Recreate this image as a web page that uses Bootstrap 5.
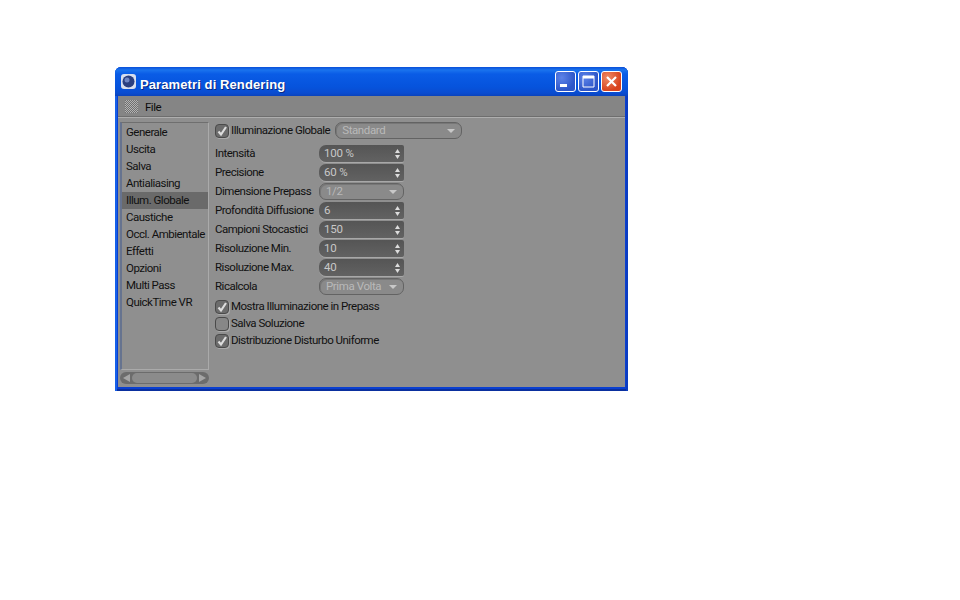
<!doctype html>
<html lang="it"><head><meta charset="utf-8"><title>Parametri di Rendering</title>
<link href="https://cdn.jsdelivr.net/npm/bootstrap@5.3.0/dist/css/bootstrap.min.css" rel="stylesheet">
<style>
html,body{background:#fff}
body{padding:67px 0 0 115px;font-family:Roboto,"Liberation Sans",sans-serif;font-size:11.5px;letter-spacing:-.5px;line-height:17px;color:#111}
.win{width:513px;height:324px;background:#0a3fd0;border-radius:6px 6px 0 0;padding:0 3px 4px 3px;box-shadow:inset 2px 0 0 #1660e8,inset -2px 0 0 #0c3cc0,inset 0 -2px 0 #0a2f9e}
.tbar{height:29px;margin:0 -3px;padding:0 6px 0 6px;border-radius:6px 6px 0 0;background:linear-gradient(#0a4fd8 0,#1a73ee 3px,#0a5ce6 7px,#0653dc 20px,#0a4cd0 26px,#0a43bc 29px)}
.ttl{font:bold 13px/29px "Liberation Sans",sans-serif;letter-spacing:.1px;color:#fff;text-shadow:1px 1px 0 #0a2a80;margin-left:4px;padding-top:5px;white-space:nowrap}
.wbtn{width:21px;height:21px;border:1px solid #fff;border-radius:3px;background:radial-gradient(circle at 30% 30%,#5d83e8,#2c55c8 70%);margin-left:2px}
.wbtn.cls{background:radial-gradient(circle at 30% 30%,#ee8a66,#d8431e 70%)}
.wbtn svg{display:block}
.body{height:291px;background:#8f8f8f}
.mbar{height:22px;background:#858585;border-bottom:1px solid #aeaeae;padding-left:7px;box-shadow:inset 0 -1px 0 #6e6e6e}
.dots{width:13px;height:13px;flex:none;background:repeating-conic-gradient(#b4b4b4 0 25%,#6f6f6f 0 50%) 0 0/2px 2px}
.mfile{margin-left:7px;padding-top:2px;color:#0c0c0c}
.main{height:269px;padding:4px 0 0 2px}
.side{width:89px}
.lst{height:248px;border:1px solid #6f6f6f;border-right-color:#aaa;border-bottom-color:#aaa;border-left:2px solid #66738f;padding-top:1px}
.itm{height:17px;padding-left:4px;white-space:nowrap}
.itm.cur{background:#6a6a6a}
.sbar{height:12px;margin-top:2px;border-radius:6px;background:#6c6c6c;padding:1px 12px}
.sthumb{height:10px;border-radius:5px;background:#8b8b8b}
.arr{position:absolute;top:2px;width:0;height:0;border-top:4px solid transparent;border-bottom:4px solid transparent}
.arr.lf{left:3px;border-right:7px solid #a5a5a5}
.arr.rt{right:3px;border-left:7px solid #a5a5a5}
.panel{padding:0 0 0 6px;flex:1}
.rw{height:19px}
.rw.last{margin-bottom:2px}
.ckrw{height:17px}
.top{height:17px;margin-bottom:5px}
.lab{width:104px;white-space:nowrap}
.ck{width:14px;height:14px;border-radius:4px;background:#6c6c6c;border:1px solid #4a4a4a;box-shadow:1px 1px 0 #aaa;margin:0 2px 0 0;flex:none}
.ck.off{background:#878787}
.ck svg{display:block}
.num{width:85px;height:17px;border-radius:7px 2px 2px 7px;background:linear-gradient(#555,#626262);color:#c8c8c8;padding:0 0 0 5px;box-shadow:0 1px 0 #a8a8a8;letter-spacing:-.2px}
.sel{width:85px;height:17px;border-radius:7px;background:#8a8a8a;border:1px solid #636363;color:#b9b9b9;padding:0 6px;box-shadow:inset 1px 1px 0 #777;letter-spacing:-.4px}
.sel.wd{width:127px;margin-left:5px}
.tri{width:0;height:0;border-left:4px solid transparent;border-right:4px solid transparent;border-top:4px solid #c8c8c8}
.ud{width:5px;height:10px;display:block}
</style></head><body>
<div class="win">
 <div class="tbar d-flex align-items-center">
  <svg width="15" height="15" viewBox="0 0 15 15"><rect width="15" height="15" rx="3" fill="#d8dfee"/><circle cx="7.5" cy="7.5" r="6" fill="#2a3f80"/><circle cx="6" cy="6" r="2.500" fill="#6f86c4"/></svg>
  <div class="ttl">Parametri di Rendering</div>
  <div class="ms-auto d-flex">
   <div class="wbtn"><svg width="19" height="19"><rect x="4" y="12" width="7" height="3" fill="#fff"/></svg></div>
   <div class="wbtn"><svg width="19" height="19"><path d="M4 4h11v11H4z" fill="none" stroke="#fff"/><rect x="4" y="4" width="11" height="2.500" fill="#fff"/></svg></div>
   <div class="wbtn cls"><svg width="19" height="19"><path d="M5 5l9 9M14 5l-9 9" stroke="#fff" stroke-width="2.200"/></svg></div>
  </div>
 </div>
 <div class="body">
  <div class="mbar d-flex align-items-center"><div class="dots"></div><div class="mfile">File</div></div>
  <div class="main d-flex">
   <div class="side">
    <div class="lst">
     <div class="itm">Generale</div><div class="itm">Uscita</div><div class="itm">Salva</div><div class="itm">Antialiasing</div>
     <div class="itm cur">Illum. Globale</div><div class="itm">Caustiche</div><div class="itm">Occl. Ambientale</div><div class="itm">Effetti</div>
     <div class="itm">Opzioni</div><div class="itm">Multi Pass</div><div class="itm">QuickTime VR</div>
    </div>
    <div class="sbar position-relative"><span class="arr lf"></span><div class="sthumb"></div><span class="arr rt"></span></div>
   </div>
   <div class="panel">
    <div class="top d-flex align-items-center"><span class="ck"><svg width="12" height="12"><path d="M2.500 6.500l2.500 3L10 2" fill="none" stroke="#ddd" stroke-width="2.200"/></svg></span><span>Illuminazione Globale</span><div class="sel wd d-flex align-items-center justify-content-between"><span>Standard</span><i class="tri"></i></div></div>
    <div class="rw d-flex align-items-center"><div class="lab">Intensità</div><div class="num d-flex align-items-center justify-content-between"><span>100 %</span><svg class="ud me-1" viewBox="0 0 5 10"><path d="M2.500 0L5 4H0zM2.500 10L0 6h5z" fill="#ddd"/></svg></div></div>
    <div class="rw d-flex align-items-center"><div class="lab">Precisione</div><div class="num d-flex align-items-center justify-content-between"><span>60 %</span><svg class="ud me-1" viewBox="0 0 5 10"><path d="M2.500 0L5 4H0zM2.500 10L0 6h5z" fill="#ddd"/></svg></div></div>
    <div class="rw d-flex align-items-center"><div class="lab">Dimensione Prepass</div><div class="sel d-flex align-items-center justify-content-between"><span>1/2</span><i class="tri"></i></div></div>
    <div class="rw d-flex align-items-center"><div class="lab">Profondità Diffusione</div><div class="num d-flex align-items-center justify-content-between"><span>6</span><svg class="ud me-1" viewBox="0 0 5 10"><path d="M2.500 0L5 4H0zM2.500 10L0 6h5z" fill="#ddd"/></svg></div></div>
    <div class="rw d-flex align-items-center"><div class="lab">Campioni Stocastici</div><div class="num d-flex align-items-center justify-content-between"><span>150</span><svg class="ud me-1" viewBox="0 0 5 10"><path d="M2.500 0L5 4H0zM2.500 10L0 6h5z" fill="#ddd"/></svg></div></div>
    <div class="rw d-flex align-items-center"><div class="lab">Risoluzione Min.</div><div class="num d-flex align-items-center justify-content-between"><span>10</span><svg class="ud me-1" viewBox="0 0 5 10"><path d="M2.500 0L5 4H0zM2.500 10L0 6h5z" fill="#ddd"/></svg></div></div>
    <div class="rw d-flex align-items-center"><div class="lab">Risoluzione Max.</div><div class="num d-flex align-items-center justify-content-between"><span>40</span><svg class="ud me-1" viewBox="0 0 5 10"><path d="M2.500 0L5 4H0zM2.500 10L0 6h5z" fill="#ddd"/></svg></div></div>
    <div class="rw last d-flex align-items-center"><div class="lab">Ricalcola</div><div class="sel d-flex align-items-center justify-content-between"><span>Prima Volta</span><i class="tri"></i></div></div>
    <div class="ckrw d-flex align-items-center"><span class="ck"><svg width="12" height="12"><path d="M2.500 6.500l2.500 3L10 2" fill="none" stroke="#ddd" stroke-width="2.200"/></svg></span><span>Mostra Illuminazione in Prepass</span></div>
    <div class="ckrw d-flex align-items-center"><span class="ck off"></span><span>Salva Soluzione</span></div>
    <div class="ckrw d-flex align-items-center"><span class="ck"><svg width="12" height="12"><path d="M2.500 6.500l2.500 3L10 2" fill="none" stroke="#ddd" stroke-width="2.200"/></svg></span><span>Distribuzione Disturbo Uniforme</span></div>
   </div>
  </div>
 </div>
</div>
</body></html>
